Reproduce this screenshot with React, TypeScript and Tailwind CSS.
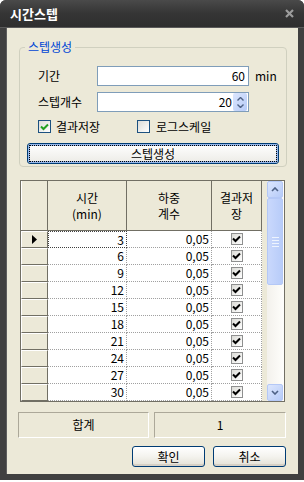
import React from 'react';

const rows = [3, 6, 9, 12, 15, 18, 21, 24, 27, 30];

const CheckMark = ({ color }: { color: string }) => (
  <svg width="9" height="8" viewBox="0 0 9 8" className="block">
    <path d="M1 3.5 L3.5 6 L8 1.5" fill="none" stroke={color} strokeWidth="2" />
  </svg>
);

const XpButton = ({ label, className = '' }: { label: string; className?: string }) => (
  <button
    type="button"
    className={`flex h-[21px] items-center justify-center rounded-[3px] border border-[#003C74] bg-gradient-to-b from-white via-[#F4F3EE] to-[#E3E1D6] text-[12px] leading-none text-black shadow-[inset_0_-2px_0_#D6D0C5] ${className}`}
  >
    {label}
  </button>
);

const ScrollArrow = ({ down }: { down?: boolean }) => (
  <div className="flex h-[17px] w-[16px] items-center justify-center rounded-[2px] border border-[#B4C8F6] bg-gradient-to-br from-[#DCE6FD] to-[#B6CBF8]">
    <svg width="8" height="5" viewBox="0 0 8 5" className={down ? 'rotate-180' : ''}>
      <path d="M1 4 L4 1 L7 4" fill="none" stroke="#4D6185" strokeWidth="1.6" />
    </svg>
  </div>
);

const HeaderCell = ({ lines, className }: { lines: string[]; className: string }) => (
  <div className={`flex flex-col items-center justify-center border-r border-[#716F64] ${className}`}>
    {lines.map((l) => (
      <div key={l} className="leading-[16px]">
        {l}
      </div>
    ))}
  </div>
);

export default function App() {
  return (
    <div className="h-[482px] w-[304px] bg-white font-['Noto_Sans_CJK_KR',sans-serif] text-[12px] text-black">
      <div className="flex h-[480px] flex-col rounded-t-[6px] bg-[#404040]">
        {/* title bar */}
        <div className="flex h-[28px] items-center justify-between rounded-t-[6px] border-b border-[#5A5A5A] bg-gradient-to-b from-[#4A4A4A] via-[#353535] to-[#2E2E2E] pl-[10px] pr-[10px]">
          <span className="text-[13px] font-bold leading-none text-white">시간스텝</span>
          <svg width="9" height="9" viewBox="0 0 9 9">
            <path d="M1 1 L8 8 M8 1 L1 8" stroke="#9C9C9C" strokeWidth="2.2" />
          </svg>
        </div>

        <div className="mx-[6px] mb-[6px] flex flex-1 flex-col border-l border-[#5E5E5E] bg-[#ECE9D8] pt-[12px]">
          {/* group box */}
          <fieldset className="ml-[12px] w-[268px] rounded-[4px] border border-[#D0D0BF] px-0 pb-[2px]">
            <legend className="ml-[5px] px-[3px] text-[12px] leading-[14px] text-[#0046D5]">스텝생성</legend>
            <div className="flex flex-col pt-[12px]">
              <div className="flex h-[20px] items-center">
                <span className="w-[77px] shrink-0 whitespace-nowrap pl-[18px]">기간</span>
                <div className="flex h-[20px] w-[152px] items-center justify-end border border-[#7F9DB9] bg-white pr-[3px]">60</div>
                <span className="ml-[6px]">min</span>
              </div>
              <div className="mt-[6px] flex h-[20px] items-center">
                <span className="w-[77px] shrink-0 whitespace-nowrap pl-[18px]">스텝개수</span>
                <div className="flex h-[20px] w-[152px] items-center justify-end gap-[1px] border border-[#7F9DB9] bg-white pr-[1px]">
                  <span>20</span>
                  <div className="flex h-[18px] w-[14px] flex-col items-center justify-center gap-[3px] rounded-[2px] bg-gradient-to-br from-[#DCE6FD] to-[#B6CBF8]">
                    <svg width="7" height="4" viewBox="0 0 7 4">
                      <path d="M0.5 3.5 L3.5 0.5 L6.5 3.5" fill="none" stroke="#4D6185" strokeWidth="1.4" />
                    </svg>
                    <svg width="7" height="4" viewBox="0 0 7 4">
                      <path d="M0.5 0.5 L3.5 3.5 L6.5 0.5" fill="none" stroke="#4D6185" strokeWidth="1.4" />
                    </svg>
                  </div>
                </div>
              </div>
              <div className="mt-[8px] flex h-[13px] items-center pl-[18px]">
                <div className="flex h-[13px] w-[13px] shrink-0 items-center justify-center border border-[#1C5180] bg-gradient-to-br from-[#DCDCD7] to-white">
                  <CheckMark color="#21A121" />
                </div>
                <span className="ml-[5px] w-[81px] shrink-0 whitespace-nowrap">결과저장</span>
                <div className="h-[13px] w-[13px] shrink-0 border border-[#1C5180] bg-gradient-to-br from-[#DCDCD7] to-white" />
                <span className="ml-[6px] whitespace-nowrap">로그스케일</span>
              </div>
              <div className="mt-[10px] px-[7px]">
                <div className="flex h-[21px] w-[252px] items-center justify-center rounded-[3px] border border-[#003C74] bg-gradient-to-b from-white to-[#ECEBE6] p-[1px] shadow-[inset_0_0_0_2px_#98B8EA]">
                  <div className="flex h-full w-full items-center justify-center border border-dotted border-black leading-none">스텝생성</div>
                </div>
              </div>
            </div>
          </fieldset>

          {/* data grid */}
          <div className="ml-[13px] mt-[13px] flex h-[222px] w-[265px] border border-[#716F64] bg-[#ECE9D8]">
            <div className="flex w-[241px] flex-col">
              <div className="flex h-[50px] border-b border-[#716F64]">
                <div className="w-[27px] border-r border-[#716F64] border-l border-l-white" />
                <HeaderCell lines={['시간', '(min)']} className="w-[79px]" />
                <HeaderCell lines={['하중', '계수']} className="w-[85px]" />
                <HeaderCell lines={['결과저', '장']} className="w-[50px]" />
              </div>
              {rows.map((v, i) => (
                <div key={v} className="flex h-[17px]">
                  <div className="flex w-[27px] items-center justify-center border-b border-r border-[#716F64] border-t border-t-white border-l border-l-white">
                    {i === 0 && (
                      <svg width="5" height="9" viewBox="0 0 5 9">
                        <path d="M0 0 L5 4.5 L0 9 Z" fill="#000" />
                      </svg>
                    )}
                  </div>
                  <div
                    className={`flex w-[79px] items-center justify-end bg-white pr-[2px] leading-none ${
                      i === 0 ? 'border border-dotted border-[#404040]' : 'border-b border-r border-dotted border-[#A0A0A0]'
                    }`}
                  >
                    {v}
                  </div>
                  <div className="flex w-[85px] items-center justify-end border-b border-r border-dotted border-[#A0A0A0] bg-white pr-[2px] leading-none">
                    0,05
                  </div>
                  <div className="flex w-[50px] items-center justify-center border-b border-r border-dotted border-[#A0A0A0] bg-white">
                    <div className="flex h-[12px] w-[12px] items-center justify-center border border-[#8E8F8F] bg-gradient-to-br from-[#DCDCD7] to-white">
                      <CheckMark color="#000" />
                    </div>
                  </div>
                </div>
              ))}
            </div>
            <div className="w-[5px]" />
            <div className="flex w-[17px] flex-col items-start bg-gradient-to-r from-[#F3F1EC] to-[#FEFEFB]">
              <ScrollArrow />
              <div className="flex h-[87px] w-[16px] flex-col items-center justify-center gap-[2px] rounded-[2px] border border-[#B4C8F6] bg-gradient-to-r from-[#C9D8FC] to-[#B8CCF9]">
                <div className="h-[1px] w-[7px] bg-[#EEF4FE]" />
                <div className="h-[1px] w-[7px] bg-[#EEF4FE]" />
                <div className="h-[1px] w-[7px] bg-[#EEF4FE]" />
                <div className="h-[1px] w-[7px] bg-[#EEF4FE]" />
              </div>
              <div className="flex-1" />
              <ScrollArrow down />
            </div>
          </div>

          {/* summary */}
          <div className="ml-[11px] mt-[10px] flex h-[26px] gap-[5px]">
            <div className="flex w-[131px] items-center justify-center border border-[#ACA899] border-b-white border-r-white">합계</div>
            <div className="flex w-[132px] items-center justify-center border border-[#ACA899] border-b-white border-r-white">1</div>
          </div>

          {/* buttons */}
          <div className="mt-[8px] flex justify-end gap-[8px] pr-[12px]">
            <XpButton label="확인" className="w-[73px]" />
            <XpButton label="취소" className="w-[73px]" />
          </div>
        </div>
      </div>
    </div>
  );
}
